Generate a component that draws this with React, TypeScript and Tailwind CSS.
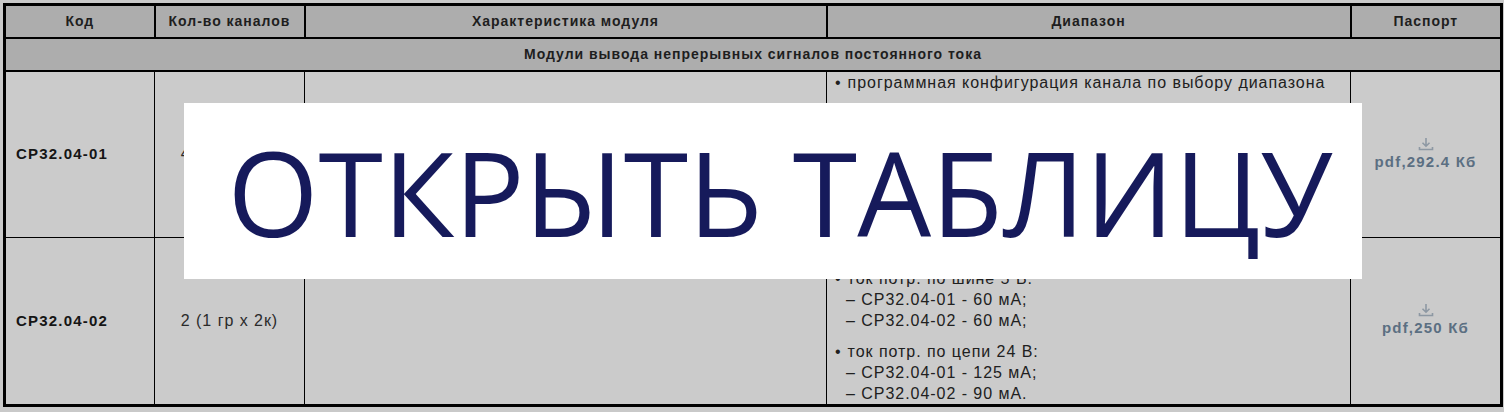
import { ReactNode } from 'react';

const rows = [
  { code: 'CP32.04-01', channels: '4 (1 гр х 4к)', pdf: 'pdf,292.4 Кб' },
  { code: 'CP32.04-02', channels: '2 (1 гр х 2к)', pdf: 'pdf,250 Кб' },
];

function DownloadIcon() {
  return (
    <svg width="16" height="14" viewBox="0 0 16 14" fill="none" stroke="#8d98a3" strokeWidth="1.6">
      <path d="M8 1v8M4.5 5.8 8 9.2l3.5-3.4" />
      <path d="M1.5 10v2.5h13V10" />
    </svg>
  );
}

function Line({ children, bullet, tall }: { children: ReactNode; bullet?: boolean; tall?: boolean }) {
  return (
    <div className={`${tall ? 'h-[21px] leading-[21px]' : 'h-5 leading-5'} whitespace-nowrap`}>
      {bullet ? <span className="mr-[6px]">•</span> : <span className="inline-block w-[11px]" />}
      {children}
    </div>
  );
}

export default function App() {
  const th = 'border-[2px] border-black font-bold text-[14px] text-[#1e1e1e] tracking-[0.07em] text-center';
  const td = 'border border-black align-middle';
  return (
    <div className="relative w-[1504px] h-[412px] bg-[#c9c9c9] pt-[3px] pl-[3px] overflow-hidden" style={{ fontFamily: '"Liberation Sans", Arial, sans-serif' }}>
      <table className="border-collapse border-[3px] border-black table-fixed w-[1497px]">
        <colgroup>
          <col className="w-[150px]" />
          <col className="w-[150px]" />
          <col className="w-[522px]" />
          <col className="w-[524px]" />
          <col className="w-[151px]" />
        </colgroup>
        <thead>
          <tr className="h-[33px] bg-[#adadad]">
            <th className={th}>Код</th>
            <th className={th}>Кол-во каналов</th>
            <th className={th}>Характеристика модуля</th>
            <th className={th}>Диапазон</th>
            <th className={th}>Паспорт</th>
          </tr>
        </thead>
        <tbody className="bg-[#cbcbcb]">
          <tr className="h-[33px] bg-[#adadad]">
            <td colSpan={5} className={th}>Модули вывода непрерывных сигналов постоянного тока</td>
          </tr>
          {rows.map((r, i) => (
            <tr key={r.code} className="h-[167px]">
              <td className={`${td} pl-[10px] font-bold text-[15px] tracking-[0.08em] text-[#151515]`}>{r.code}</td>
              <td className={`${td} text-center text-[16px] text-[#2a2a2a] tracking-[0.06em]`}>{r.channels}</td>
              {i === 0 && (
                <>
                  <td rowSpan={2} className={td}></td>
                  <td rowSpan={2} className={`${td} align-top pl-[8px] pt-[1px] text-[16px] text-[#202020] tracking-[0.06em]`}>
                    <div className="mb-[10px]">
                      <Line bullet>программная конфигурация канала по выбору диапазона</Line>
                    </div>
                    <div className="mb-[15px]">
                      <Line>выходного сигнала:</Line>
                      <Line>– 0...5 мА; 0...20 мА; 4...20 мА;</Line>
                      <Line>– 0...10 В; -10...10 В;</Line>
                    </div>
                    <div className="mb-[10px] pt-[40px]">
                      <Line bullet>гальваническая изоляция:</Line>
                      <Line>групповая</Line>
                    </div>
                    <div className="mb-[10px]">
                      <Line bullet tall>ток потр. по шине 5 В:</Line>
                      <Line tall>– CP32.04-01 - 60 мА;</Line>
                      <Line tall>– CP32.04-02 - 60 мА;</Line>
                    </div>
                    <div>
                      <Line bullet tall>ток потр. по цепи 24 В:</Line>
                      <Line tall>– CP32.04-01 - 125 мА;</Line>
                      <Line tall>– CP32.04-02 - 90 мА.</Line>
                    </div>
                  </td>
                </>
              )}
              <td className={`${td} text-center`}>
                <div className="flex flex-col items-center gap-[3px] pb-[2px]">
                  <DownloadIcon />
                  <span className="font-bold text-[15px] text-[#5b6f82] tracking-[0.08em] leading-4">{r.pdf}</span>
                </div>
              </td>
            </tr>
          ))}
        </tbody>
      </table>

      <div className="absolute left-[184px] top-[103px] w-[1178px] h-[176px] bg-white flex items-center justify-center">
        <span
          className="text-[117px] leading-none text-[#161a5b] whitespace-nowrap pl-[14px]"
          style={{ fontFamily: '"Open Sans", "Noto Sans", sans-serif' }}
        >
          ОТКРЫТЬ ТАБЛИЦУ
        </span>
      </div>
    </div>
  );
}
